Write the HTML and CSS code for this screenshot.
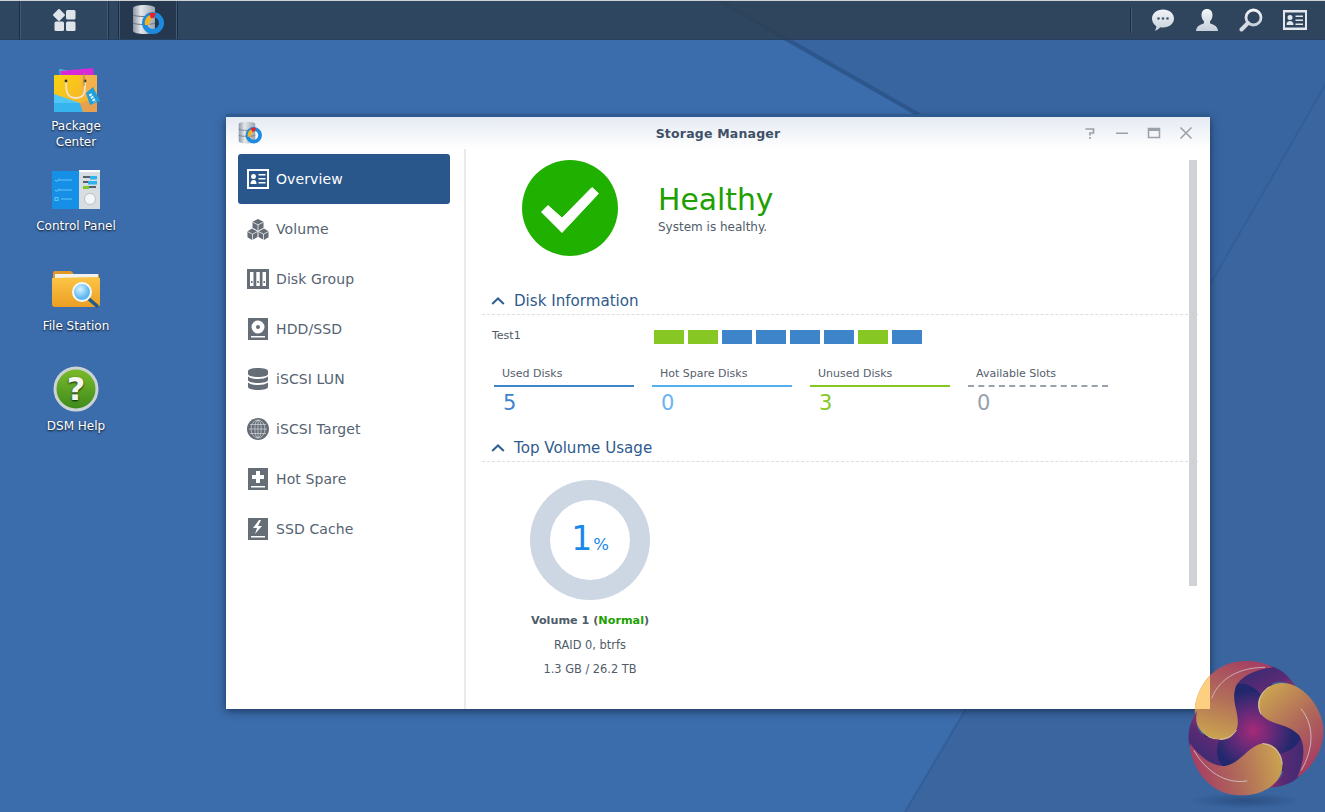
FILE: index.html
```html
<!DOCTYPE html>
<html lang="en">
<head>
<meta charset="utf-8">
<title>Storage Manager</title>
<link rel="stylesheet" href="styles.css">
</head>
<body>
<svg class="defs" width="0" height="0">
  <defs>
    <linearGradient id="cyl" x1="0" x2="1" y1="0" y2="0"><stop offset="0" stop-color="#8d97a3"/><stop offset=".35" stop-color="#e4e8ec"/><stop offset="1" stop-color="#9aa4b0"/></linearGradient>
    <symbol id="sm-icon" viewBox="0 0 32 32">
      <path d="M1 4c0-2 6-3 11-3s11 1 11 3v23c0 2-6 3-11 3S1 29 1 27z" fill="url(#cyl)"/>
      <path d="M1 11c3 2 19 2 22 0M1 19c3 2 19 2 22 0" stroke="#6b7683" stroke-width="1" fill="none"/>
      <circle cx="21" cy="19" r="8.500" fill="none" stroke="#1b8be0" stroke-width="5"/>
      <path d="M13 21a8.500 8.500 0 0 1 5-10l1.500 5a4 4 0 0 0-2 5z" fill="#f5b41d"/>
      <path d="M17 9.500a10 10 0 0 1 7-.2l-2 5a4 4 0 0 0-3 0z" fill="#e3242b"/>
    </symbol>
    <linearGradient id="petal" x1=".75" y1="0" x2=".45" y2="1"><stop offset="0" stop-color="#a63f63"/><stop offset=".5" stop-color="#b06a5a"/><stop offset="1" stop-color="#c99f50"/></linearGradient>
    <radialGradient id="core"><stop offset="0" stop-color="#a62a78"/><stop offset=".45" stop-color="#5c2a78"/><stop offset=".8" stop-color="#23286e"/></radialGradient>
    <linearGradient id="ribbon" x1="0" y1="0" x2="1" y2="1"><stop offset="0" stop-color="#2b2c74"/><stop offset=".6" stop-color="#5a2a74"/><stop offset="1" stop-color="#a33a6a"/></linearGradient>
    <radialGradient id="shade"><stop offset="0" stop-color="#1d3a68" stop-opacity=".9"/><stop offset="1" stop-color="#1d3a68" stop-opacity="0"/></radialGradient>
    <linearGradient id="bag" x1="0" y1="0" x2="1" y2="1"><stop offset="0" stop-color="#fbd30c"/><stop offset="1" stop-color="#f2a83a"/></linearGradient>
    <linearGradient id="folder" x1="0" y1="0" x2="0" y2="1"><stop offset="0" stop-color="#fdc545"/><stop offset="1" stop-color="#eb9f24"/></linearGradient>
    <radialGradient id="lens" cx=".4" cy=".35"><stop offset="0" stop-color="#d8f2ff"/><stop offset="1" stop-color="#5cb8ee"/></radialGradient>
    <linearGradient id="helpg" x1="0" y1="0" x2="0" y2="1"><stop offset="0" stop-color="#7dbb2a"/><stop offset="1" stop-color="#3c8a1c"/></linearGradient>
    <linearGradient id="tb" x1="0" y1="0" x2="0" y2="1"><stop offset="0" stop-color="#f2f4f7"/><stop offset="1" stop-color="#c6d0da"/></linearGradient>
    <clipPath id="over-window"><rect x="0" y="0" width="135" height="207"/></clipPath>
  </defs>
</svg>

<svg class="wallpaper" viewBox="0 0 1325 812" width="1325" height="812" aria-hidden="true">
  <rect width="1325" height="812" fill="#3b6cab"/>
  <polygon points="1210,709 965,709 905,812 1325,812 1325,85 1210,285" fill="#3a659f"/>
  <polygon points="718,0 1325,0 1325,85 1210,285 1210,117 921,117" fill="#38649f"/>
  <path d="M718 0 L921 116" stroke="#2c568c" stroke-width="4" fill="none"/>
  <path d="M1325 85 L1210 285" stroke="#325f99" stroke-width="2" fill="none"/>
  <path d="M966 709 L905 812" stroke="#325f99" stroke-width="2" fill="none"/>
</svg>

<header class="taskbar">
  <div class="task-left">
    <button class="task-btn task-main" aria-label="Main menu">
      <svg width="24" height="24" viewBox="0 0 24 24"><rect x="2.500" y="2.500" width="9" height="9" rx="1" transform="rotate(45 7 7)" fill="#dfe4ea"/><rect x="14" y="2" width="9.500" height="9.500" rx="1.500" fill="#dfe4ea"/><rect x="2.500" y="13.500" width="9.500" height="9.500" rx="1.500" fill="#dfe4ea"/><rect x="14" y="13.500" width="9.500" height="9.500" rx="1.500" fill="#dfe4ea"/></svg>
    </button>
    <button class="task-btn task-app" aria-label="Storage Manager">
      <svg width="32" height="32"><use href="#sm-icon"/></svg>
    </button>
  </div>
  <div class="task-right">
    <svg width="24" height="24" viewBox="0 0 24 24"><path d="M12 1.500c6.200 0 11 3.900 11 9s-4.800 9-11 9c-1 0-1.900-.1-2.800-.3C7.800 21 6 22.200 3.800 22.500c1-1.300 1.500-2.800 1.500-4.300C2.800 16.500 1 13.700 1 10.500c0-5.100 4.800-9 11-9z" fill="url(#tb)"/><circle cx="7.500" cy="10.500" r="1.300" fill="#46586e"/><circle cx="12" cy="10.500" r="1.300" fill="#46586e"/><circle cx="16.500" cy="10.500" r="1.300" fill="#46586e"/></svg>
    <svg width="24" height="24" viewBox="0 0 24 24"><path d="M12 1c3.500 0 5.500 2.600 5.500 6 0 2.600-1.100 5-2.500 6.300v2c2.500 1.200 7.500 2 8 7.700H1c.5-5.700 5.500-6.500 8-7.700v-2C7.600 12 6.500 9.600 6.500 7 6.500 3.600 8.500 1 12 1z" fill="url(#tb)"/></svg>
    <svg width="24" height="24" viewBox="0 0 24 24"><circle cx="14.500" cy="9.500" r="7.500" fill="none" stroke="url(#tb)" stroke-width="2.800"/><path d="M9 15L2.500 21.500" stroke="#d5dbe2" stroke-width="4" stroke-linecap="round"/></svg>
    <svg width="24" height="20" viewBox="0 0 24 20"><path fill-rule="evenodd" d="M0 0h24v20H0zM2 2.500v15h20v-15z" fill="#e4e8ed"/><circle cx="7" cy="7.500" r="2.500" fill="#e4e8ed"/><path d="M3.500 15c0-3 1.500-4 3.500-4s3.500 1 3.500 4zM12.500 5.500H20v1.600h-7.500zM12.500 9.500H20v1.600h-7.500zM12.500 13.500H20v1.600h-7.500z" fill="#e4e8ed"/></svg>
  </div>
</header>

<nav class="desktop-icons">
  <a class="desk-item">
    <svg width="48" height="48" viewBox="0 0 48 48">
      <path d="M8 9l-1-6 12 2z" fill="#41c4d0"/><path d="M9 9l-1-4 33-3 1 7z" fill="#d629d9"/>
      <rect x="2" y="9" width="43" height="37" rx="1" fill="url(#bag)"/>
      <path d="M29 9h16v30L30 30z" fill="#f5b14a"/>
      <path d="M2 28l26 9 3 9H3a1 1 0 0 1-1-1z" fill="#4fc6f5"/>
      <path d="M2 37l26 0 3 9H3a1 1 0 0 1-1-1z" fill="#35b4ee"/>
      <path d="M28 37l15-4 2 3v9a1 1 0 0 1-1 1H31z" fill="#e6a050"/>
      <path d="M14 15c0 9 0 17 10 17s9-8 9-17" fill="none" stroke="#f4e3c4" stroke-width="1.800"/>
      <circle cx="14" cy="15" r="1.400" fill="#333"/><circle cx="33" cy="15" r="1.400" fill="#333"/>
      <path d="M32 7v13" stroke="#a88a3a" stroke-width="1"/>
      <path d="M34 27l7-6 7 14-10 4z" fill="#1f9fdc"/><path d="M38 28l5 8" stroke="#e8f6fd" stroke-width="3" stroke-dasharray="2 1"/>
    </svg>
    <span>Package<br>Center</span>
  </a>
  <a class="desk-item">
    <svg width="48" height="48" viewBox="0 0 48 40" class="cp">
      <rect width="27" height="38" y="1" fill="#1590e6"/><rect x="27" y="1" width="21" height="38" fill="#d7dde0"/><rect x="27" y="0" width="21" height="2" fill="#fff"/>
      <path d="M6 10h14M6 20h14M9 29h11" stroke="#63c8f5" stroke-width="1"/><path d="M3 10l2 1.500 2-3M3 20l2 1.500 2-3" stroke="#63c8f5" fill="none"/><rect x="3" y="27.500" width="3" height="3" stroke="#63c8f5" fill="none"/>
      <rect x="31" y="6" width="13" height="2" fill="#56606a"/><rect x="38" y="6" width="7" height="3.500" fill="#2fb3ee"/><rect x="31" y="11" width="13" height="2" fill="#56606a"/><rect x="36" y="11" width="9" height="3.500" fill="#2fb3ee"/><rect x="31" y="16" width="13" height="2" fill="#56606a"/><rect x="31" y="16" width="6" height="3" fill="#7ecb24"/>
      <circle cx="38" cy="29" r="5.500" fill="#f4f6f7" stroke="#b9c0c6"/>
    </svg>
    <span>Control Panel</span>
  </a>
  <a class="desk-item">
    <svg width="48" height="48" viewBox="0 0 48 48">
      <path d="M1 7c0-1 .5-2 2-2h16l3 3h24a1 1 0 0 1 1 1v12H1z" fill="#e0982a"/>
      <rect x="3" y="8" width="43" height="8" fill="#f1f1ee"/>
      <path d="M0 12l46-1c1 0 2 1 2 2v25a3 3 0 0 1-3 3H3a3 3 0 0 1-3-3z" fill="url(#folder)"/>
      <path d="M37 33l8 7" stroke="#1f5a8c" stroke-width="3.500" stroke-linecap="round"/>
      <circle cx="30" cy="26" r="9" fill="url(#lens)" stroke="#f5f8fa" stroke-width="2"/>
    </svg>
    <span>File Station</span>
  </a>
  <a class="desk-item">
    <svg width="48" height="48" viewBox="0 0 48 48">
      <circle cx="24" cy="23" r="21" fill="url(#helpg)" stroke="#ccd3d6" stroke-width="3"/>
      <text x="24" y="34" text-anchor="middle" class="help-q">?</text>
    </svg>
    <span>DSM Help</span>
  </a>
</nav>

<section class="window">
  <div class="titlebar">
    <svg class="title-icon" width="24" height="24"><use href="#sm-icon"/></svg>
    <h1 class="title">Storage Manager</h1>
    <div class="win-buttons">
      <svg width="14" height="14" viewBox="0 0 14 14"><path d="M2.500 3h8v4H7v2.500" fill="none" stroke="#9aa1a8" stroke-width="1.700"/><rect x="6.100" y="11" width="1.800" height="1.800" fill="#9aa1a8"/></svg>
      <svg width="14" height="14" viewBox="0 0 14 14"><rect x="1" y="6.500" width="12" height="1.500" fill="#9aa1a8"/></svg>
      <svg width="14" height="14" viewBox="0 0 14 14"><rect x="1.500" y="2.500" width="11" height="9" fill="none" stroke="#9aa1a8" stroke-width="1.500"/><rect x="1" y="2" width="12" height="3" fill="#9aa1a8"/></svg>
      <svg width="14" height="14" viewBox="0 0 14 14"><path d="M1.500 1.500l11 11M12.500 1.500l-11 11" stroke="#9aa1a8" stroke-width="1.500"/></svg>
    </div>
  </div>
  <div class="win-body">
    <aside class="sidebar">
      <a class="nav-item active">
        <svg class="nav-icon" viewBox="0 0 22 20"><path fill-rule="evenodd" d="M0 0h22v20H0zM2 2v16h18V2z" fill="#fff"/><circle cx="6.500" cy="7.500" r="2.500" fill="#fff"/><path d="M3.500 15c0-3 1.300-4 3-4s3 1 3 4zM11.500 5h7v1.600h-7zM11.500 9h7v1.600h-7zM11.500 13h7v1.600h-7z" fill="#fff"/></svg>
        <span>Overview</span>
      </a>
      <a class="nav-item">
        <svg class="nav-icon" viewBox="0 0 24 24"><path d="M12 1l6 3.200v6.300l-6 3.300-6-3.300V4.200zM5.500 11.500l6 3.300v6l-6 3.200-5-3V14.500zM18.500 11.500l5 3v6.500l-5 3-6-3.200v-6z" fill="#656d76"/><path d="M6 4.500l6 3 6-3M12 7.500v6M.5 14.700l5.500 3 5.500-3M6 17.700V24M12.500 14.700l5.500 3 5.500-3M18 17.700V24" stroke="#fff" stroke-width=".8" fill="none"/></svg>
        <span>Volume</span>
      </a>
      <a class="nav-item">
        <svg class="nav-icon" viewBox="0 0 22 20"><path fill-rule="evenodd" d="M0 0h22v20H0zM3 3v14h3.500V3zM9.300 3v14h3.500V3zM15.500 3v14H19V3z" fill="#656d76"/><rect x="4" y="12" width="1.500" height="2" fill="#656d76"/><rect x="10.300" y="12" width="1.500" height="2" fill="#656d76"/><rect x="16.500" y="12" width="1.500" height="2" fill="#656d76"/></svg>
        <span>Disk Group</span>
      </a>
      <a class="nav-item">
        <svg class="nav-icon" viewBox="0 0 22 22"><path fill-rule="evenodd" d="M1 0h20v22H1zM11 2.500a6.500 6.500 0 1 0 0 13 6.500 6.500 0 0 0 0-13zM4 18v1.500h14V18z" fill="#656d76"/><circle cx="11" cy="9" r="2" fill="#656d76"/></svg>
        <span>HDD/SSD</span>
      </a>
      <a class="nav-item">
        <svg class="nav-icon" viewBox="0 0 22 22"><path d="M1 3c0-1.700 4.500-3 10-3s10 1.300 10 3v3c0 1.700-4.500 3-10 3S1 7.700 1 6zM1 8.500C3 10.200 7 11 11 11s8-.8 10-2.500V12c0 1.700-4.500 3-10 3S1 13.700 1 12zM1 14.500C3 16.200 7 17 11 17s8-.8 10-2.500V19c0 1.700-4.500 3-10 3S1 20.700 1 19z" fill="#656d76"/></svg>
        <span>iSCSI LUN</span>
      </a>
      <a class="nav-item">
        <svg class="nav-icon" viewBox="0 0 22 22"><circle cx="11" cy="11" r="11" fill="#656d76"/><g fill="none" stroke="#d5d8db" stroke-width=".7"><ellipse cx="11" cy="11" rx="3.200" ry="9"/><ellipse cx="11" cy="11" rx="7" ry="9"/><path d="M11 2v18M3 6.500h16M2 11h18M3 15.500h16"/></g></svg>
        <span>iSCSI Target</span>
      </a>
      <a class="nav-item">
        <svg class="nav-icon" viewBox="0 0 22 22"><path fill-rule="evenodd" d="M1 0h20v22H1zM9 3v4H5v4h4v4h4v-4h4V7h-4V3zM4 18v1.500h14V18z" fill="#656d76"/></svg>
        <span>Hot Spare</span>
      </a>
      <a class="nav-item">
        <svg class="nav-icon" viewBox="0 0 22 22"><path fill-rule="evenodd" d="M1 0h20v22H1zM12 2L6 10h4l-2 6 7-8h-4l3-6zM4 18v1.500h14V18z" fill="#656d76"/></svg>
        <span>SSD Cache</span>
      </a>
    </aside>
    <main class="content">
      <div class="status">
        <svg class="status-icon" width="96" height="96" viewBox="0 0 96 96"><circle cx="48" cy="48" r="48" fill="#20b000"/><path d="M19.500 52L26 45.500 40 58 70 27.500 76.500 33.500 40 72.500Z" fill="#fff" stroke="#fff" stroke-width="1" stroke-linejoin="round"/></svg>
        <div class="status-text">
          <div class="status-title">Healthy</div>
          <div class="status-sub">System is healthy.</div>
        </div>
      </div>

      <div class="section-head">
        <svg width="14" height="8" viewBox="0 0 14 8"><path d="M1.200 7L7 1.500 12.800 7" fill="none" stroke="#315f92" stroke-width="2"/></svg>
        <span>Disk Information</span>
      </div>
      <div class="disk-row">
        <span class="disk-name">Test1</span>
        <div class="disk-bars">
          <i class="bar unused"></i><i class="bar unused"></i><i class="bar used"></i><i class="bar used"></i><i class="bar used"></i><i class="bar used"></i><i class="bar unused"></i><i class="bar used"></i>
        </div>
      </div>
      <div class="tiles">
        <div class="tile t-used"><div class="tile-label">Used Disks</div><div class="tile-num">5</div></div>
        <div class="tile t-spare"><div class="tile-label">Hot Spare Disks</div><div class="tile-num">0</div></div>
        <div class="tile t-unused"><div class="tile-label">Unused Disks</div><div class="tile-num">3</div></div>
        <div class="tile t-slots"><div class="tile-label">Available Slots</div><div class="tile-num">0</div></div>
      </div>

      <div class="section-head second">
        <svg width="14" height="8" viewBox="0 0 14 8"><path d="M1.200 7L7 1.500 12.800 7" fill="none" stroke="#315f92" stroke-width="2"/></svg>
        <span>Top Volume Usage</span>
      </div>
      <div class="volume">
        <div class="donut"><div class="donut-hole"><b>1</b><small>%</small></div></div>
        <div class="vol-name">Volume 1 (<em>Normal</em>)</div>
        <div class="vol-line">RAID 0, btrfs</div>
        <div class="vol-line">1.3 GB / 26.2 TB</div>
      </div>
      <div class="scrollbar"></div>
    </main>
  </div>
</section>

<svg class="watermark" width="160" height="172" viewBox="0 0 480 516" aria-hidden="true">
  <ellipse cx="240" cy="482" rx="170" ry="24" fill="url(#shade)" opacity=".55"/>
  <circle cx="265" cy="272" r="150" fill="url(#core)"/>
  <g id="wm-arm">
    <path d="M212 135C240 55 345 48 398 150C362 118 318 112 290 165C275 145 240 122 212 135Z" fill="url(#ribbon)"/>
    <path d="M325 82C270 52 175 52 125 118C80 175 75 255 125 288C165 312 212 300 218 255C222 215 198 185 212 140C225 112 265 88 325 82Z" fill="url(#petal)"/>
    <path d="M300 82C230 82 165 110 140 175M130 290C150 302 190 305 215 270" fill="none" stroke="#d8d4e0" stroke-width="2.500" opacity=".8"/>
  </g>
  <use href="#wm-arm" transform="rotate(120 265 268)"/>
  <use href="#wm-arm" transform="rotate(240 265 268)"/>
  <path clip-path="url(#over-window)" d="M325 82C270 52 175 52 125 118C80 175 75 255 125 288C165 312 212 300 218 255C222 215 198 185 212 140C225 112 265 88 325 82Z" fill="#fcd080"/>
</svg>
</body>
</html>
```

FILE: styles.css
```css
* { box-sizing: border-box; }
html, body { margin: 0; padding: 0; }
body {
  position: relative;
  width: 1325px;
  height: 812px;
  overflow: hidden;
  background: #3b6cab;
  font-family: "DejaVu Sans", Verdana, sans-serif;
}
.defs { position: absolute; }
.wallpaper { position: absolute; left: 0; top: 0; display: block; }

/* taskbar */
.taskbar {
  position: absolute;
  left: 0; top: 0; right: 0;
  height: 40px;
  display: flex;
  justify-content: space-between;
  border-top: 1px solid #cfd3d6;
  border-bottom: 1px solid #26405f;
  background: rgba(46, 64, 82, .85);
}
.task-left { display: flex; gap: 9px; padding-left: 19px; }
.task-btn {
  display: flex;
  align-items: center;
  justify-content: center;
  height: 38px;
  padding: 0;
  border: 0;
  border-left: 1px solid #1d2c42;
  border-right: 1px solid #1d2c42;
  box-shadow: inset 1px 0 0 #465a76, inset -1px 0 0 #465a76;
  background: transparent;
}
.task-main { width: 90px; }
.task-app { width: 60px; background: rgba(20, 32, 50, .35); }
.task-right {
  display: flex;
  align-items: center;
  gap: 20px;
  padding-right: 18px;
  position: relative;
}
.task-right::before {
  content: "";
  width: 1px;
  height: 26px;
  background: #1d2c42;
  box-shadow: 1px 0 0 #465a76;
}

/* desktop */
.desktop-icons {
  position: absolute;
  left: 26px;
  top: 66px;
  width: 100px;
  display: grid;
  grid-auto-rows: 100px;
  color: #fff;
}
.desk-item {
  display: flex;
  flex-direction: column;
  align-items: center;
  font-size: 12px;
  line-height: 16px;
  text-align: center;
  text-shadow: 0 1px 2px rgba(0, 0, 0, .85);
}
.desk-item svg { display: block; margin-bottom: 4px; }
.desk-item span { white-space: nowrap; }
.help-q { font: bold 32px "DejaVu Sans", sans-serif; fill: #f4f7ef; }

/* window */
.window {
  position: absolute;
  left: 226px;
  top: 117px;
  width: 984px;
  height: 592px;
  display: flex;
  flex-direction: column;
  background: #fff;
  box-shadow: 0 -3px 0 #2d5a90, 0 2px 8px rgba(10, 25, 50, .65);
}
.titlebar {
  position: relative;
  flex: none;
  height: 32px;
  display: flex;
  align-items: center;
  justify-content: center;
  background: linear-gradient(#e5eaf2, #fff);
}
.title-icon { position: absolute; left: 12px; top: 4px; }
.title {
  margin: 0;
  font-size: 12.500px;
  font-weight: bold;
  letter-spacing: .2px;
  color: #3f5068;
}
.win-buttons {
  position: absolute;
  right: 17px;
  top: 9px;
  display: flex;
  gap: 18px;
}
.win-body { flex: 1; display: flex; min-height: 0; }

/* sidebar */
.sidebar {
  flex: none;
  width: 240px;
  padding: 5px 14px 0 12px;
  border-right: 2px solid #e8eaec;
  display: flex;
  flex-direction: column;
}
.nav-item {
  display: flex;
  align-items: center;
  height: 50px;
  padding-left: 9px;
  gap: 7px;
  font-size: 14px;
  letter-spacing: .1px;
  color: #556372;
  border-radius: 3px;
}
.nav-item.active { background: #29568b; color: #fff; }
.nav-icon { width: 22px; height: 22px; flex: none; }

/* content */
.content { position: relative; flex: 1; min-width: 0; padding-left: 16px; }
.status {
  display: flex;
  align-items: center;
  padding: 11px 0 0 40px;
  gap: 40px;
}
.status-icon { display: block; flex: none; }
.status-text { margin-top: 1px; }
.status-title {
  font-size: 29.800px;
  line-height: 34px;
  color: #20a000;
}
.status-sub {
  margin-top: 2px;
  font-size: 12px;
  line-height: 16px;
  color: #505c68;
}
.section-head {
  width: 716px;
  height: 30px;
  margin-top: 29px;
  padding: 2px 0 0 9px;
  display: flex;
  align-items: center;
  gap: 9px;
  font-size: 15.100px;
  color: #2f5a8c;
  border-bottom: 1px dashed #d9dfe8;
}
.section-head.second { margin-top: 12px; padding-top: 3px; }
.disk-row { display: flex; align-items: center; height: 40px; padding: 0 0 0 10px; }
.disk-name { width: 162px; font-size: 11px; color: #4e5a66; }
.disk-bars { display: flex; gap: 4px; margin-top: 4px; }
.bar { display: block; width: 30px; height: 14px; }
.bar.used { background: #3d84cb; }
.bar.unused { background: #86c724; }
.tiles { display: flex; gap: 18px; padding-left: 12px; margin-top: 7px; }
.tile { width: 140px; }
.tile-label {
  height: 25px;
  padding: 5px 0 0 8px;
  font-size: 11px;
  line-height: 14px;
  color: #55606c;
  border-bottom: 2px solid;
}
.tile-num { padding-left: 9px; font-size: 21px; line-height: 33px; }
.t-used .tile-label { border-color: #3d84cb; }
.t-used .tile-num { color: #3d84cb; }
.t-spare .tile-label { border-color: #55aef0; }
.t-spare .tile-num { color: #6ab4f0; }
.t-unused .tile-label { border-color: #86c724; }
.t-unused .tile-num { color: #86c724; }
.t-slots .tile-label { border-bottom: 2px dashed #98a2ad; }
.t-slots .tile-num { color: #98a2ad; }
.volume {
  width: 216px;
  padding-top: 18px;
  display: flex;
  flex-direction: column;
  align-items: center;
}
.donut {
  width: 120px;
  height: 120px;
  border-radius: 50%;
  background: #cdd7e3;
  display: flex;
  align-items: center;
  justify-content: center;
}
.donut-hole {
  width: 80px;
  height: 80px;
  border-radius: 50%;
  background: #fff;
  display: flex;
  align-items: baseline;
  justify-content: center;
  line-height: 78px;
  color: #1a88e8;
}
.donut-hole b { font-weight: normal; font-size: 33px; }
.donut-hole small { font-size: 16.500px; margin-left: 1px; }
.vol-name {
  margin-top: 13px;
  font-size: 11.200px;
  line-height: 16px;
  font-weight: bold;
  color: #505c68;
}
.vol-name em { font-style: normal; color: #20a000; }
.vol-line {
  margin-top: 8px;
  font-size: 11.400px;
  line-height: 16px;
  color: #505c68;
}
.vol-name + .vol-line { margin-top: 8px; }
.scrollbar {
  position: absolute;
  left: 723px;
  top: 11px;
  width: 8px;
  height: 426px;
  background: #d0d2d5;
}

/* watermark */
.watermark { position: absolute; left: 1165px; top: 640px; display: block; }
```
